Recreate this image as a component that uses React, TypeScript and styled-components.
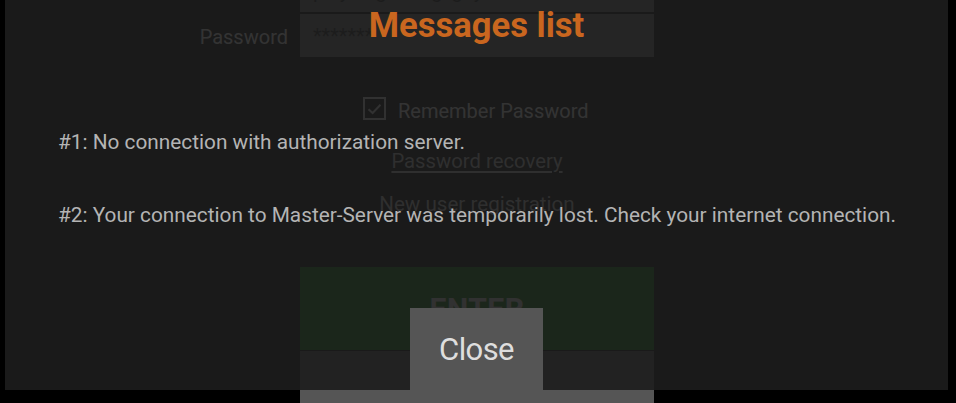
import React from "react";
import styled, { createGlobalStyle } from "styled-components";

const GlobalStyle = createGlobalStyle`
  html, body {
    margin: 0;
    padding: 0;
    background: #000;
    overflow: hidden;
  }
  * { box-sizing: border-box; }
`;

const Page = styled.div`
  position: relative;
  width: 956px;
  height: 403px;
  overflow: hidden;
  background: #000;
  font-family: Roboto, "Noto Sans", "Liberation Sans", sans-serif;
`;

/* ---------- underlying login form ---------- */

const LoginForm = styled.div`
  display: grid;
  grid-template-columns: 1fr 354px 1fr;
  padding-right: 2px;
  margin-top: -31px;
`;

const FieldLabel = styled.div`
  grid-column: 1;
  justify-self: end;
  align-self: center;
  padding: 5px 12px 0 0;
  color: #fff;
  font-size: 20px;
  line-height: 24px;
`;

const Field = styled.div<{ $gap?: number }>`
  grid-column: 2;
  height: 43px;
  margin-top: ${(p) => p.$gap ?? 0}px;
  background: #6e6e6e;
  color: #1c1c1c;
  padding-left: 13px;
  display: flex;
  align-items: center;
  font-size: 20px;
`;

const CheckRow = styled.label`
  grid-column: 2;
  margin-top: 40px;
  padding-left: 63px;
  display: flex;
  align-items: center;
  gap: 12px;
  height: 23px;
  color: #fff;
  font-size: 20px;
`;

const CheckText = styled.span`
  padding-top: 5px;
`;

const CheckBox = styled.span`
  width: 23px;
  height: 23px;
  border: 2px solid #e6e6e6;
  display: flex;
  align-items: center;
  justify-content: center;
`;

const FormLink = styled.a<{ $top: number; $size: number }>`
  grid-column: 2;
  justify-self: center;
  margin-top: ${(p) => p.$top}px;
  color: #cfcfcf;
  font-size: ${(p) => p.$size}px;
  line-height: 24px;
  text-decoration: underline;
  text-underline-offset: 3px;
`;

const PlainLink = styled.span<{ $top: number; $size: number }>`
  grid-column: 2;
  justify-self: center;
  margin-top: ${(p) => p.$top}px;
  color: #cfcfcf;
  font-size: ${(p) => p.$size}px;
  line-height: 24px;
`;

const EnterButton = styled.button`
  grid-column: 2;
  margin-top: 51px;
  height: 83px;
  border: none;
  background: #107a10;
  color: #e4e4e4;
  font-family: inherit;
  font-weight: 700;
  font-size: 30px;
  letter-spacing: 0.5px;
`;

const SecondaryButton = styled.button`
  grid-column: 2;
  margin-top: 1px;
  height: 60px;
  border: none;
  background: #555;
`;

/* ---------- messages overlay ---------- */

const Overlay = styled.div`
  position: absolute;
  left: 5px;
  top: 0;
  width: 943px;
  height: 390px;
  background: rgba(29, 29, 29, 0.9);
  display: flex;
  flex-direction: column;
  padding-top: 8px;
`;

const Title = styled.h1`
  margin: 0;
  text-align: center;
  color: #c9661f;
  font-size: 34.6px;
  line-height: 1;
  font-weight: 700;
`;

const MessageList = styled.ul`
  list-style: none;
  margin: 87px 0 0;
  padding: 0 0 0 53px;
  display: flex;
  flex-direction: column;
  gap: 49px;
`;

const Message = styled.li`
  color: #b4b4b4;
  font-size: 20.8px;
  line-height: 24px;
  white-space: nowrap;
`;

const CloseButton = styled.button`
  margin-top: auto;
  align-self: center;
  width: 133px;
  height: 82px;
  border: none;
  background: #555;
  color: #dedede;
  font-family: inherit;
  font-size: 31px;
  letter-spacing: -0.6px;
  padding: 0;
  cursor: pointer;
`;

const messages = [
  "No connection with authorization server.",
  "Your connection to Master-Server was temporarily lost. Check your internet connection.",
];

export default function App() {
  return (
    <>
      <GlobalStyle />
      <Page>
        <LoginForm>
          <Field>player_gaming_guy</Field>
          <FieldLabel>Password</FieldLabel>
          <Field $gap={2}>*******</Field>
          <CheckRow>
            <CheckBox>
              <svg width="15" height="12" viewBox="0 0 15 12" fill="none">
                <path d="M1.5 6.2 L5.6 10 L13.5 1.8" stroke="#e6e6e6" strokeWidth="2" />
              </svg>
            </CheckBox>
            <CheckText>Remember Password</CheckText>
          </CheckRow>
          <FormLink $top={29} $size={20.3}>Password recovery</FormLink>
          <PlainLink $top={19} $size={20.6}>New user registration</PlainLink>
          <EnterButton>ENTER</EnterButton>
          <SecondaryButton />
        </LoginForm>

        <Overlay>
          <Title>Messages list</Title>
          <MessageList>
            {messages.map((m, i) => (
              <Message key={i}>
                #{i + 1}: {m}
              </Message>
            ))}
          </MessageList>
          <CloseButton>Close</CloseButton>
        </Overlay>
      </Page>
    </>
  );
}
